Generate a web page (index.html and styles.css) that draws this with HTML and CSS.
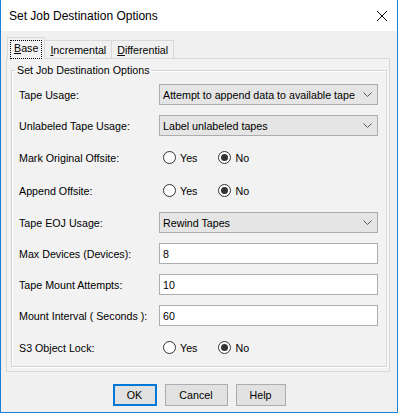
FILE: index.html
```html
<!DOCTYPE html>
<html lang="en">
<head>
  <meta charset="UTF-8">
  <title>Set Job Destination Options</title>
  <link rel="stylesheet" href="styles.css">
</head>
<body>
  <div class="window">
    <div class="titlebar">
      <span class="title">Set Job Destination Options</span>
      <span class="close">
        <svg width="12" height="12" viewBox="0 0 12 12"><path d="M1 1 L11 11 M11 1 L1 11" stroke="#000" stroke-width="1" fill="none"/></svg>
      </span>
    </div>

    <div class="content">
      <div class="tabs">
        <div class="tab active"><span class="focus"><u>B</u>ase</span></div>
        <div class="tab"><u>I</u>ncremental</div>
        <div class="tab"><u>D</u>ifferential</div>
      </div>

      <div class="panel">
        <fieldset class="group">
          <legend>Set Job Destination Options</legend>

          <div class="row">
            <label>Tape Usage:</label>
            <div class="select">Attempt to append data to available tape<svg class="chev" width="9" height="5" viewBox="0 0 9 5"><path d="M0.5 0.5 L4.5 4.5 L8.5 0.5" stroke="#5a5a5a" fill="none"/></svg></div>
          </div>
          <div class="row">
            <label>Unlabeled Tape Usage:</label>
            <div class="select">Label unlabeled tapes<svg class="chev" width="9" height="5" viewBox="0 0 9 5"><path d="M0.5 0.5 L4.5 4.5 L8.5 0.5" stroke="#5a5a5a" fill="none"/></svg></div>
          </div>
          <div class="row radio-row">
            <label>Mark Original Offsite:</label>
            <div class="radios">
              <span class="option"><span class="radio"></span>Yes</span>
              <span class="option"><span class="radio checked"></span>No</span>
            </div>
          </div>
          <div class="row radio-row">
            <label>Append Offsite:</label>
            <div class="radios">
              <span class="option"><span class="radio"></span>Yes</span>
              <span class="option"><span class="radio checked"></span>No</span>
            </div>
          </div>
          <div class="row">
            <label>Tape EOJ Usage:</label>
            <div class="select">Rewind Tapes<svg class="chev" width="9" height="5" viewBox="0 0 9 5"><path d="M0.5 0.5 L4.5 4.5 L8.5 0.5" stroke="#5a5a5a" fill="none"/></svg></div>
          </div>
          <div class="row">
            <label>Max Devices (Devices):</label>
            <input class="field" type="text" value="8">
          </div>
          <div class="row">
            <label>Tape Mount Attempts:</label>
            <input class="field" type="text" value="10">
          </div>
          <div class="row">
            <label>Mount Interval ( Seconds ):</label>
            <input class="field" type="text" value="60">
          </div>
          <div class="row radio-row">
            <label>S3 Object Lock:</label>
            <div class="radios">
              <span class="option"><span class="radio"></span>Yes</span>
              <span class="option"><span class="radio checked"></span>No</span>
            </div>
          </div>
        </fieldset>
      </div>

      <div class="buttons">
        <button class="btn default btn-ok">OK</button>
        <button class="btn btn-cancel">Cancel</button>
        <button class="btn btn-help">Help</button>
      </div>
    </div>
  </div>
</body>
</html>
```

FILE: styles.css
```css
body {
  margin: 0;
  font-family: "Liberation Sans", Arial, sans-serif;
  font-size: 10.7px;
  color: #000;
  background: #fff;
}
.window {
  width: 398px;
  height: 413px;
  box-sizing: border-box;
  border: 1px solid #1a7fd6;
  border-top: none;
  background: #f0f0f0;
  display: flex;
  flex-direction: column;
}
.titlebar {
  height: 31px;
  background: #fff;
  display: flex;
  align-items: center;
  justify-content: space-between;
  padding-left: 8px;
  padding-right: 9px;
}
.title {
  font-size: 12px;
  padding-top: 1px;
}
.close {
  display: flex;
  padding-top: 1px;
}
.content {
  padding: 6px 7px 0 5px;
}
.tabs {
  display: flex;
  align-items: flex-end;
  height: 21px;
  padding-left: 1px;
  position: relative;
  z-index: 1;
}
.tab {
  height: 18px;
  box-sizing: border-box;
  border: 1px solid #d9d9d9;
  border-bottom: none;
  padding: 2px 5px 0 5px;
  margin-left: -1px;
  background: #f0f0f0;
  line-height: 15px;
}
.tab:first-child {
  margin-left: 0;
}
.tab.active {
  height: 22px;
  margin-bottom: -1px;
  padding: 2px 2px 0 2px;
  border-color: #d9d9d9;
  background: #f2f2f2;
}
.focus {
  display: inline-block;
  border: 1px dotted #000;
  padding: 0 3px 2px 3px;
  line-height: 15px;
}
.panel {
  border: 1px solid #d9d9d9;
  background: #f2f2f2;
  padding: 5px 2px 4px 4px;
}
.group {
  margin: 0;
  border: 1px solid #d5d5d5;
  box-shadow: inset 1px 1px 0 #fff, 1px 1px 0 #fff;
  padding: 7px 8px 7px 7px;
  display: flex;
  flex-direction: column;
  gap: 10px;
}
.group legend {
  padding: 0 2px;
  margin-left: -4px;
  line-height: 13px;
}
.row {
  display: grid;
  grid-template-columns: 140px 219px;
  align-items: center;
  height: 21px;
}
.radio-row {
  height: 23px;
}
.select {
  height: 21px;
  box-sizing: border-box;
  border: 1px solid #adadad;
  background: #e5e5e5;
  display: flex;
  align-items: center;
  justify-content: space-between;
  padding: 0 5px 0 3px;
}
.chev {
  display: block;
}
.field {
  height: 21px;
  box-sizing: border-box;
  width: 219px;
  margin: 0;
  border: 1px solid #adadad;
  background: #fff;
  padding: 0 3px;
  font-family: "Liberation Sans", Arial, sans-serif;
  font-size: 10.7px;
  color: #000;
  outline: none;
}
.radios {
  display: flex;
  gap: 21px;
  padding-left: 4px;
}
.option {
  display: inline-flex;
  align-items: center;
  gap: 4px;
}
.radio {
  width: 13px;
  height: 13px;
  box-sizing: border-box;
  border: 1px solid #333;
  border-radius: 50%;
  background: #fff;
  display: inline-flex;
  align-items: center;
  justify-content: center;
}
.radio.checked::after {
  content: "";
  width: 7px;
  height: 7px;
  border-radius: 50%;
  background: #333;
}
.buttons {
  display: flex;
  justify-content: center;
  gap: 8px;
  margin-top: 12px;
  padding-left: 2px;
}
.btn {
  height: 22px;
  box-sizing: border-box;
  border: 1px solid #adadad;
  background: #e1e1e1;
  font-family: "Liberation Sans", Arial, sans-serif;
  font-size: 10.7px;
  color: #000;
  padding: 0;
}
.btn.default {
  border-color: #0078d7;
  box-shadow: inset 0 0 0 1px #0078d7;
}
.btn-ok {
  width: 44px;
}
.btn-cancel {
  width: 63px;
}
.btn-help {
  width: 50px;
}
```
